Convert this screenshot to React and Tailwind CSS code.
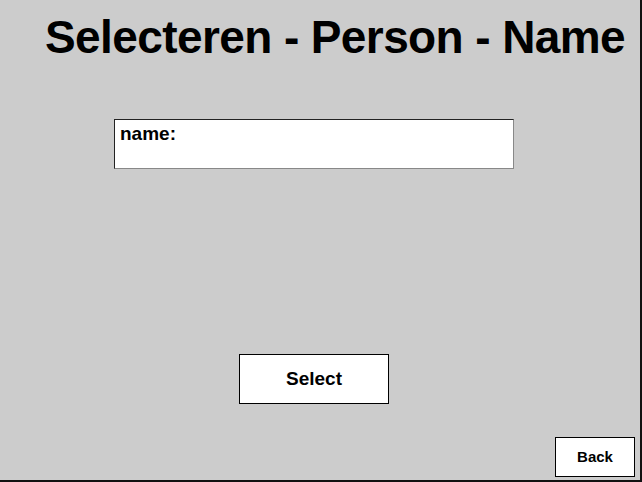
export default function App() {
  return (
    <div
      className="flex h-[482px] w-[642px] flex-col border-r-2 border-b-2 border-[#111] bg-[#cccccc] text-black"
      style={{ fontFamily: '"Liberation Sans", Arial, sans-serif' }}
    >
      <h1 className="pl-[45px] pt-[14px] text-[46px] font-bold leading-none tracking-[-0.6px] whitespace-nowrap">
        Selecteren - Person - Name
      </h1>

      <div className="ml-[114px] mt-[59px] h-[50px] w-[400px] border border-t-[#222] border-l-[#222] border-r-[#888] border-b-[#888] bg-white pl-[5px] pt-[3px]">
        <span className="text-[19px] font-bold leading-[22px]">name:</span>
      </div>

      <button className="ml-[239px] mt-[185px] flex h-[50px] w-[150px] items-center justify-center border border-black bg-white text-[19px] font-bold">
        Select
      </button>

      <button className="mr-[5px] mt-[33px] flex h-[40px] w-[80px] items-center justify-center self-end border border-black bg-white text-[15px] font-bold">
        Back
      </button>
    </div>
  );
}
